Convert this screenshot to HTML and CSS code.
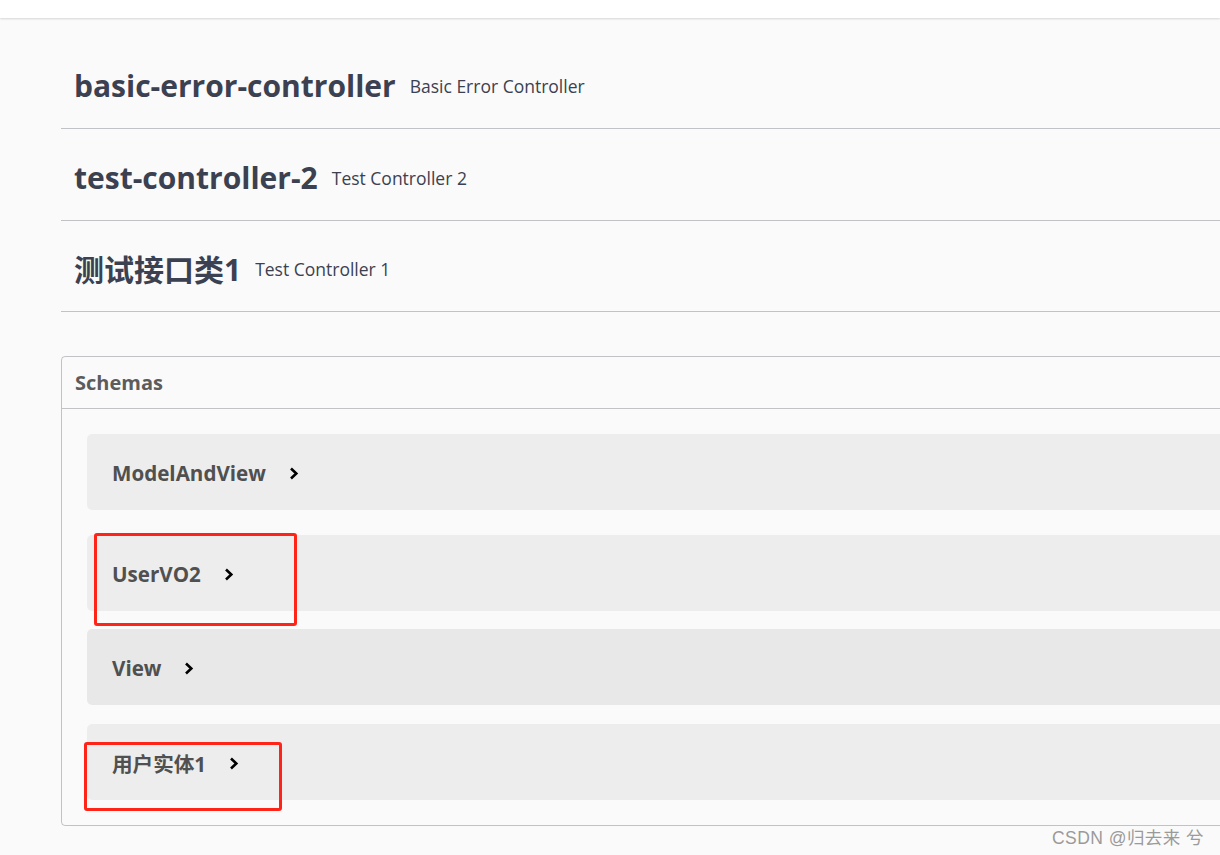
FILE: index.html
```html
<!DOCTYPE html>
<html lang="zh-CN">

<head>
    <meta charset="UTF-8">
    <meta name="viewport" content="width=device-width, initial-scale=1.0">
    <title>Swagger UI</title>
    <link rel="stylesheet" href="styles.css">
</head>

<body>
    <div class="topbar"></div>

    <div class="wrapper">
        <div class="tag-section">
            <h3 class="tag">
                <span class="tag-name">basic-error-controller</span>
                <small class="tag-desc">Basic Error Controller</small>
            </h3>
        </div>
        <div class="tag-section">
            <h3 class="tag">
                <span class="tag-name">test-controller-2</span>
                <small class="tag-desc">Test Controller 2</small>
            </h3>
        </div>
        <div class="tag-section">
            <h3 class="tag">
                <span class="tag-name">测试接口类1</span>
                <small class="tag-desc">Test Controller 1</small>
            </h3>
        </div>

        <section class="models">
            <h4 class="models-title">Schemas</h4>
            <div class="models-body">
                <div class="model-container">
                    <span class="model-title">ModelAndView</span>
                    <svg class="model-toggle" viewBox="0 0 10 13"><polyline points="2,1.5 7.3,6.5 2,11.5"/></svg>
                </div>
                <div class="model-container">
                    <span class="model-title">UserVO2</span>
                    <svg class="model-toggle" viewBox="0 0 10 13"><polyline points="2,1.5 7.3,6.5 2,11.5"/></svg>
                </div>
                <div class="model-container hover">
                    <span class="model-title">View</span>
                    <svg class="model-toggle" viewBox="0 0 10 13"><polyline points="2,1.5 7.3,6.5 2,11.5"/></svg>
                </div>
                <div class="model-container">
                    <span class="model-title">用户实体1</span>
                    <svg class="model-toggle" viewBox="0 0 10 13"><polyline points="2,1.5 7.3,6.5 2,11.5"/></svg>
                </div>
            </div>
        </section>
    </div>

    <!-- annotation boxes drawn over the screenshot -->
    <div class="mark mark-1"></div>
    <div class="mark mark-2"></div>

    <div class="watermark">CSDN @归去来 兮</div>
</body>

</html>
```

FILE: styles.css
```css
html,
body {
    margin: 0;
    padding: 0;
}

body {
    background: #fafafa;
    font-family: "Open Sans", "Noto Sans CJK SC", sans-serif;
    color: #3b4151;
    width: 1220px;
    height: 855px;
    overflow: hidden;
    position: relative;
}

.topbar {
    height: 18px;
    background: #fff;
    box-shadow: 0 1px 2px rgba(0, 0, 0, 0.15);
    position: relative;
    z-index: 1;
}

.wrapper {
    padding-top: 19px;
    margin-left: 61px;
    width: 1300px;
}

.tag {
    display: flex;
    align-items: center;
    margin: 0;
    height: 92px;
    padding: 7px 13px 0;
    box-sizing: border-box;
    line-height: 1.2;
    border-bottom: 1px solid rgba(59, 65, 81, 0.3);
}

.tag-section:last-of-type .tag {
    height: 91px;
}

.tag-name {
    font-size: 30px;
    font-weight: 700;
    color: #3b4151;
}

.tag-desc {
    font-size: 17.5px;
    font-weight: 400;
    color: #3b4151;
    margin-left: 14px;
}

.models {
    margin-top: 44px;
    border: 1px solid rgba(59, 65, 81, 0.3);
    border-radius: 4px;
}

.models-title {
    margin: 0;
    padding: 0 13px;
    height: 51px;
    line-height: 51px;
    font-size: 20px;
    font-weight: 700;
    color: #5c5c5c;
    border-bottom: 1px solid rgba(59, 65, 81, 0.3);
}

.models-body {
    padding: 25px 25px 25px;
}

.model-container {
    height: 76px;
    background: rgba(0, 0, 0, 0.05);
    border-radius: 5px;
    display: flex;
    align-items: center;
    padding: 2px 25px 0;
    box-sizing: border-box;
    margin-bottom: 18px;
}

.model-container:first-child {
    margin-bottom: 25px;
}

.model-container:nth-child(3) {
    margin-bottom: 19px;
}

.model-container:last-child {
    margin-bottom: 0;
}

.model-container.hover {
    background: rgba(0, 0, 0, 0.07);
}

.model-title {
    font-size: 20.6px;
    font-weight: 700;
    color: #505050;
}

.model-toggle {
    width: 10px;
    height: 13px;
    margin-left: 23px;
    margin-top: 1px;
    fill: none;
    stroke: #000;
    stroke-width: 2.6;
}

.mark {
    position: absolute;
    border: 3px solid #ff2418;
    border-radius: 3px;
    box-sizing: border-box;
}

.mark-1 {
    left: 94px;
    top: 533px;
    width: 203px;
    height: 93px;
}

.mark-2 {
    left: 84px;
    top: 742px;
    width: 198px;
    height: 69px;
}

.watermark {
    position: absolute;
    left: 1052px;
    top: 824px;
    font-family: "Liberation Sans", "Noto Sans CJK SC", sans-serif;
    font-size: 17.5px;
    color: #9a9a9a;
    letter-spacing: 0.45px;
}
```
